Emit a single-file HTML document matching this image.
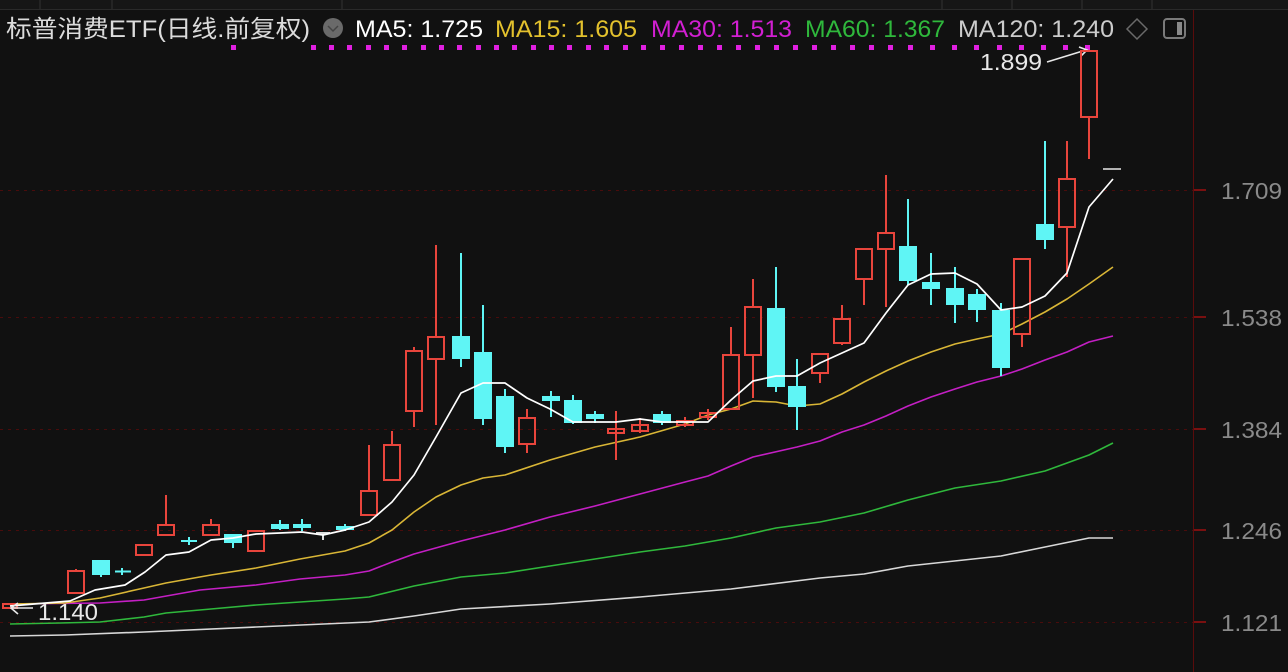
<!DOCTYPE html>
<html><head><meta charset="utf-8"><style>
html,body{margin:0;padding:0;background:#111111;}
svg{display:block}
text{font-family:"Liberation Sans","Noto Sans CJK SC",sans-serif;}
</style></head><body>
<svg width="1288" height="672" viewBox="0 0 1288 672" xmlns="http://www.w3.org/2000/svg">
<rect width="1288" height="672" fill="#111111"/>
<rect width="1288" height="9" fill="#161616"/>
<line x1="0" y1="9.5" x2="1288" y2="9.5" stroke="#2a2a2a"/>
<g stroke="#333" stroke-width="1">
<line x1="40" y1="0" x2="40" y2="9"/><line x1="112" y1="0" x2="112" y2="9"/><line x1="342" y1="0" x2="342" y2="9"/><line x1="942" y1="0" x2="942" y2="9"/><line x1="1012" y1="0" x2="1012" y2="9"/><line x1="1082" y1="0" x2="1082" y2="9"/><line x1="1152" y1="0" x2="1152" y2="9"/>
</g>
<g stroke="#4a0c0c" stroke-width="1" stroke-dasharray="3,5">
<line x1="0" y1="190.5" x2="1193" y2="190.5"/><line x1="0" y1="317.5" x2="1193" y2="317.5"/><line x1="0" y1="429.5" x2="1193" y2="429.5"/><line x1="0" y1="530.5" x2="1193" y2="530.5"/><line x1="0" y1="622.5" x2="1193" y2="622.5"/>
</g>
<line x1="1193.5" y1="10" x2="1193.5" y2="672" stroke="#5a0c0c"/>
<g stroke="#7a1010" stroke-width="2">
<line x1="1194" y1="190" x2="1206" y2="190"/><line x1="1194" y1="317" x2="1206" y2="317"/><line x1="1194" y1="429" x2="1206" y2="429"/><line x1="1194" y1="530" x2="1206" y2="530"/><line x1="1194" y1="622" x2="1206" y2="622"/>
</g>
<g fill="#8a8a8a" font-size="23">
<text x="1221" y="199" textLength="61" lengthAdjust="spacingAndGlyphs">1.709</text><text x="1221" y="326" textLength="61" lengthAdjust="spacingAndGlyphs">1.538</text><text x="1221" y="438" textLength="61" lengthAdjust="spacingAndGlyphs">1.384</text><text x="1221" y="539" textLength="61" lengthAdjust="spacingAndGlyphs">1.246</text><text x="1221" y="631" textLength="61" lengthAdjust="spacingAndGlyphs">1.121</text>
</g>
<text x="6" y="37" font-size="24" fill="#dcdcdc" textLength="304" lengthAdjust="spacingAndGlyphs">标普消费ETF(日线.前复权)</text>
<circle cx="333" cy="28" r="10" fill="#6a6a6a"/>
<path d="M328 26 L333 31 L338 26" stroke="#444" stroke-width="1.5" fill="none"/>
<text x="355" y="37" font-size="24" fill="#ffffff" textLength="128" lengthAdjust="spacingAndGlyphs">MA5: 1.725</text>
<text x="495" y="37" font-size="24" fill="#e3c12d" textLength="142" lengthAdjust="spacingAndGlyphs">MA15: 1.605</text>
<text x="651" y="37" font-size="24" fill="#d21fd2" textLength="141" lengthAdjust="spacingAndGlyphs">MA30: 1.513</text>
<text x="805" y="37" font-size="24" fill="#2fb83c" textLength="140" lengthAdjust="spacingAndGlyphs">MA60: 1.367</text>
<text x="958" y="37" font-size="24" fill="#cccccc" textLength="156" lengthAdjust="spacingAndGlyphs">MA120: 1.240</text>
<path d="M1137 19 L1147 29 L1137 39 L1127 29 Z" stroke="#6a6a6a" stroke-width="1.5" fill="none"/>
<rect x="1164" y="19" width="21" height="19" rx="3" stroke="#7a7a7a" stroke-width="2" fill="none"/>
<rect x="1177" y="22" width="5" height="13" fill="#8a8a8a"/>
<g fill="#e020e0">
<rect x="231" y="45" width="5" height="5"/>
<rect x="311" y="45" width="5" height="5"/><rect x="329" y="45" width="5" height="5"/><rect x="347" y="45" width="5" height="5"/><rect x="366" y="45" width="5" height="5"/><rect x="384" y="45" width="5" height="5"/><rect x="402" y="45" width="5" height="5"/><rect x="421" y="45" width="5" height="5"/><rect x="439" y="45" width="5" height="5"/><rect x="457" y="45" width="5" height="5"/><rect x="476" y="45" width="5" height="5"/><rect x="494" y="45" width="5" height="5"/><rect x="512" y="45" width="5" height="5"/><rect x="531" y="45" width="5" height="5"/><rect x="549" y="45" width="5" height="5"/><rect x="567" y="45" width="5" height="5"/><rect x="586" y="45" width="5" height="5"/><rect x="604" y="45" width="5" height="5"/><rect x="623" y="45" width="5" height="5"/><rect x="641" y="45" width="5" height="5"/><rect x="660" y="45" width="5" height="5"/><rect x="679" y="45" width="5" height="5"/><rect x="698" y="45" width="5" height="5"/><rect x="717" y="45" width="5" height="5"/><rect x="736" y="45" width="5" height="5"/><rect x="755" y="45" width="5" height="5"/><rect x="774" y="45" width="5" height="5"/><rect x="793" y="45" width="5" height="5"/><rect x="812" y="45" width="5" height="5"/><rect x="831" y="45" width="5" height="5"/><rect x="850" y="45" width="5" height="5"/><rect x="869" y="45" width="5" height="5"/><rect x="888" y="45" width="5" height="5"/><rect x="908" y="45" width="5" height="5"/><rect x="930" y="45" width="5" height="5"/><rect x="952" y="45" width="5" height="5"/><rect x="974" y="45" width="5" height="5"/><rect x="997" y="45" width="5" height="5"/><rect x="1019" y="45" width="5" height="5"/><rect x="1041" y="45" width="5" height="5"/><rect x="1063" y="45" width="5" height="5"/><rect x="1085" y="45" width="5" height="5"/>
</g>
<text x="980" y="70" font-size="23" fill="#e8e8e8" textLength="62" lengthAdjust="spacingAndGlyphs">1.899</text>
<path d="M1047 62 L1086 50 M1079 47 L1087 50 L1081 56" stroke="#e8e8e8" stroke-width="1.6" fill="none"/>
<g fill="none" stroke-width="1.6" stroke-linejoin="round">
<polyline stroke="#d8d8d8" points="10,636 65,635 144,632 256,627 369,622 414,616 461,609 550,604 640,597 731,589 820,578 864,574 908,566 1001,556 1045,547 1089,538 1113,538"/>
<polyline stroke="#2fb83c" points="10,624 60,623 100,622 144,617 166,613 211,609 256,605 300,602 345,599 369,597 414,586 461,577 505,573 550,566 595,559 640,552 685,546 731,538 776,528 820,522 864,513 908,500 955,488 1001,481 1045,471 1089,455 1113,443"/>
<polyline stroke="#c41fc4" points="10,604 100,603 144,600 200,590 256,585 300,579 345,575 369,571 392,562 414,554 461,541 505,530 550,517 595,506 640,494 685,482 708,476 731,466 753,457 797,447 820,441 842,432 864,425 886,416 908,406 931,397 955,389 977,382 1001,376 1022,369 1045,360 1067,352 1089,342 1113,336"/>
<polyline stroke="#d9b636" points="10,604 65,603 100,598 144,588 166,583 211,575 256,568 300,559 345,551 369,543 392,530 414,512 436,497 461,485 483,478 505,475 550,460 595,447 640,437 685,424 708,415 731,409 753,401 776,402 797,406 820,404 842,394 864,382 886,371 908,361 931,352 955,344 977,339 1001,334 1022,324 1045,312 1067,299 1089,284 1113,267"/>
</g>
<g stroke-width="2">
<g stroke="#e8453c" fill="none">
<rect x="3" y="604" width="14" height="4"/>
<line x1="76" y1="569" x2="76" y2="571"/><rect x="68" y="571" width="16" height="22"/>
<rect x="136" y="545" width="16" height="10"/>
<line x1="166" y1="495" x2="166" y2="525"/><rect x="158" y="525" width="16" height="10"/>
<line x1="211" y1="519" x2="211" y2="525"/><rect x="203" y="525" width="16" height="10"/>
<rect x="248" y="531" width="16" height="20"/>
<line x1="369" y1="445" x2="369" y2="491"/><rect x="361" y="491" width="16" height="24"/>
<line x1="392" y1="431" x2="392" y2="445"/><rect x="384" y="445" width="16" height="35"/>
<line x1="414" y1="347" x2="414" y2="351"/><line x1="414" y1="411" x2="414" y2="427"/><rect x="406" y="351" width="16" height="60"/>
<line x1="436" y1="245" x2="436" y2="337"/><line x1="436" y1="359" x2="436" y2="425"/><rect x="428" y="337" width="16" height="22"/>
<line x1="527" y1="409" x2="527" y2="418"/><line x1="527" y1="444" x2="527" y2="453"/><rect x="519" y="418" width="16" height="26"/>
<line x1="616" y1="411" x2="616" y2="460"/><rect x="608" y="429" width="16" height="4"/>
<line x1="640" y1="418" x2="640" y2="433"/><rect x="632" y="425" width="16" height="6"/>
<line x1="685" y1="417" x2="685" y2="427"/><rect x="677" y="421" width="16" height="4"/>
<line x1="708" y1="409" x2="708" y2="420"/><rect x="700" y="413" width="16" height="4"/>
<line x1="731" y1="327" x2="731" y2="355"/><rect x="723" y="355" width="16" height="54"/>
<line x1="753" y1="279" x2="753" y2="307"/><line x1="753" y1="355" x2="753" y2="398"/><rect x="745" y="307" width="16" height="48"/>
<line x1="820" y1="373" x2="820" y2="383"/><rect x="812" y="354" width="16" height="19"/>
<line x1="842" y1="305" x2="842" y2="319"/><line x1="842" y1="343" x2="842" y2="345"/><rect x="834" y="319" width="16" height="24"/>
<line x1="864" y1="279" x2="864" y2="305"/><rect x="856" y="249" width="16" height="30"/>
<line x1="886" y1="175" x2="886" y2="233"/><line x1="886" y1="249" x2="886" y2="307"/><rect x="878" y="233" width="16" height="16"/>
<line x1="1022" y1="334" x2="1022" y2="347"/><rect x="1014" y="259" width="16" height="75"/>
<line x1="1067" y1="141" x2="1067" y2="179"/><line x1="1067" y1="227" x2="1067" y2="277"/><rect x="1059" y="179" width="16" height="48"/>
<line x1="1089" y1="117" x2="1089" y2="159"/><rect x="1081" y="51" width="16" height="66"/>
</g>
<g stroke="#5ff5f5" fill="#5ff5f5">
<line x1="101" y1="561" x2="101" y2="577"/><rect x="93" y="561" width="16" height="13"/>
<line x1="122" y1="568" x2="122" y2="575"/><line x1="115" y1="571.5" x2="131" y2="571.5"/>
<line x1="189" y1="537" x2="189" y2="545"/><line x1="181" y1="541" x2="197" y2="541"/>
<line x1="233" y1="535" x2="233" y2="548"/><rect x="225" y="535" width="16" height="7"/>
<line x1="280" y1="520" x2="280" y2="530"/><rect x="272" y="525" width="16" height="3"/>
<line x1="302" y1="519" x2="302" y2="531"/><rect x="294" y="525" width="16" height="2"/>
<line x1="345" y1="524" x2="345" y2="531"/><rect x="337" y="527" width="16" height="2"/>
<line x1="461" y1="253" x2="461" y2="367"/><rect x="453" y="337" width="16" height="21"/>
<line x1="483" y1="305" x2="483" y2="425"/><rect x="475" y="353" width="16" height="65"/>
<line x1="505" y1="389" x2="505" y2="453"/><rect x="497" y="397" width="16" height="49"/>
<line x1="551" y1="391" x2="551" y2="417"/><rect x="543" y="397" width="16" height="3"/>
<line x1="573" y1="395" x2="573" y2="424"/><rect x="565" y="401" width="16" height="21"/>
<line x1="595" y1="411" x2="595" y2="423"/><rect x="587" y="415" width="16" height="3"/>
<line x1="662" y1="411" x2="662" y2="425"/><rect x="654" y="415" width="16" height="7"/>
<line x1="776" y1="267" x2="776" y2="392"/><rect x="768" y="309" width="16" height="77"/>
<line x1="797" y1="359" x2="797" y2="430"/><rect x="789" y="387" width="16" height="19"/>
<line x1="908" y1="199" x2="908" y2="285"/><rect x="900" y="247" width="16" height="33"/>
<line x1="931" y1="253" x2="931" y2="305"/><rect x="923" y="283" width="16" height="5"/>
<line x1="955" y1="267" x2="955" y2="323"/><rect x="947" y="289" width="16" height="15"/>
<line x1="977" y1="289" x2="977" y2="322"/><rect x="969" y="295" width="16" height="14"/>
<line x1="1001" y1="303" x2="1001" y2="376"/><rect x="993" y="311" width="16" height="56"/>
<line x1="1045" y1="141" x2="1045" y2="249"/><rect x="1037" y="225" width="16" height="14"/>
</g>
<line x1="323" y1="533" x2="323" y2="540" stroke="#dddddd"/><line x1="316" y1="533" x2="330" y2="533" stroke="#dddddd"/>
</g>
<polyline fill="none" stroke="#ffffff" stroke-width="1.7" stroke-linejoin="round" points="10,606 70,601 95,590 125,585 145,572 166,555 189,552 211,540 233,538 256,534 280,533 302,532 323,535 345,530 369,522 392,502 414,475 436,437 461,393 483,383 505,383 527,398 550,409 573,422 595,422 616,422 640,419 662,422 685,422 708,422 731,400 753,381 776,376 797,376 820,363 842,353 864,343 886,313 908,285 931,274 955,273 977,284 1001,310 1022,307 1045,296 1067,273 1089,207 1113,179"/>
<line x1="1103" y1="169" x2="1121" y2="169" stroke="#e8e8e8" stroke-width="1.6"/>
<path d="M33 608 L12 608 M18 603 L11 608 L18 614" stroke="#e8e8e8" stroke-width="1.6" fill="none"/>
<text x="38" y="620" font-size="23" fill="#e8e8e8" textLength="60" lengthAdjust="spacingAndGlyphs">1.140</text>
</svg>
</body></html>
